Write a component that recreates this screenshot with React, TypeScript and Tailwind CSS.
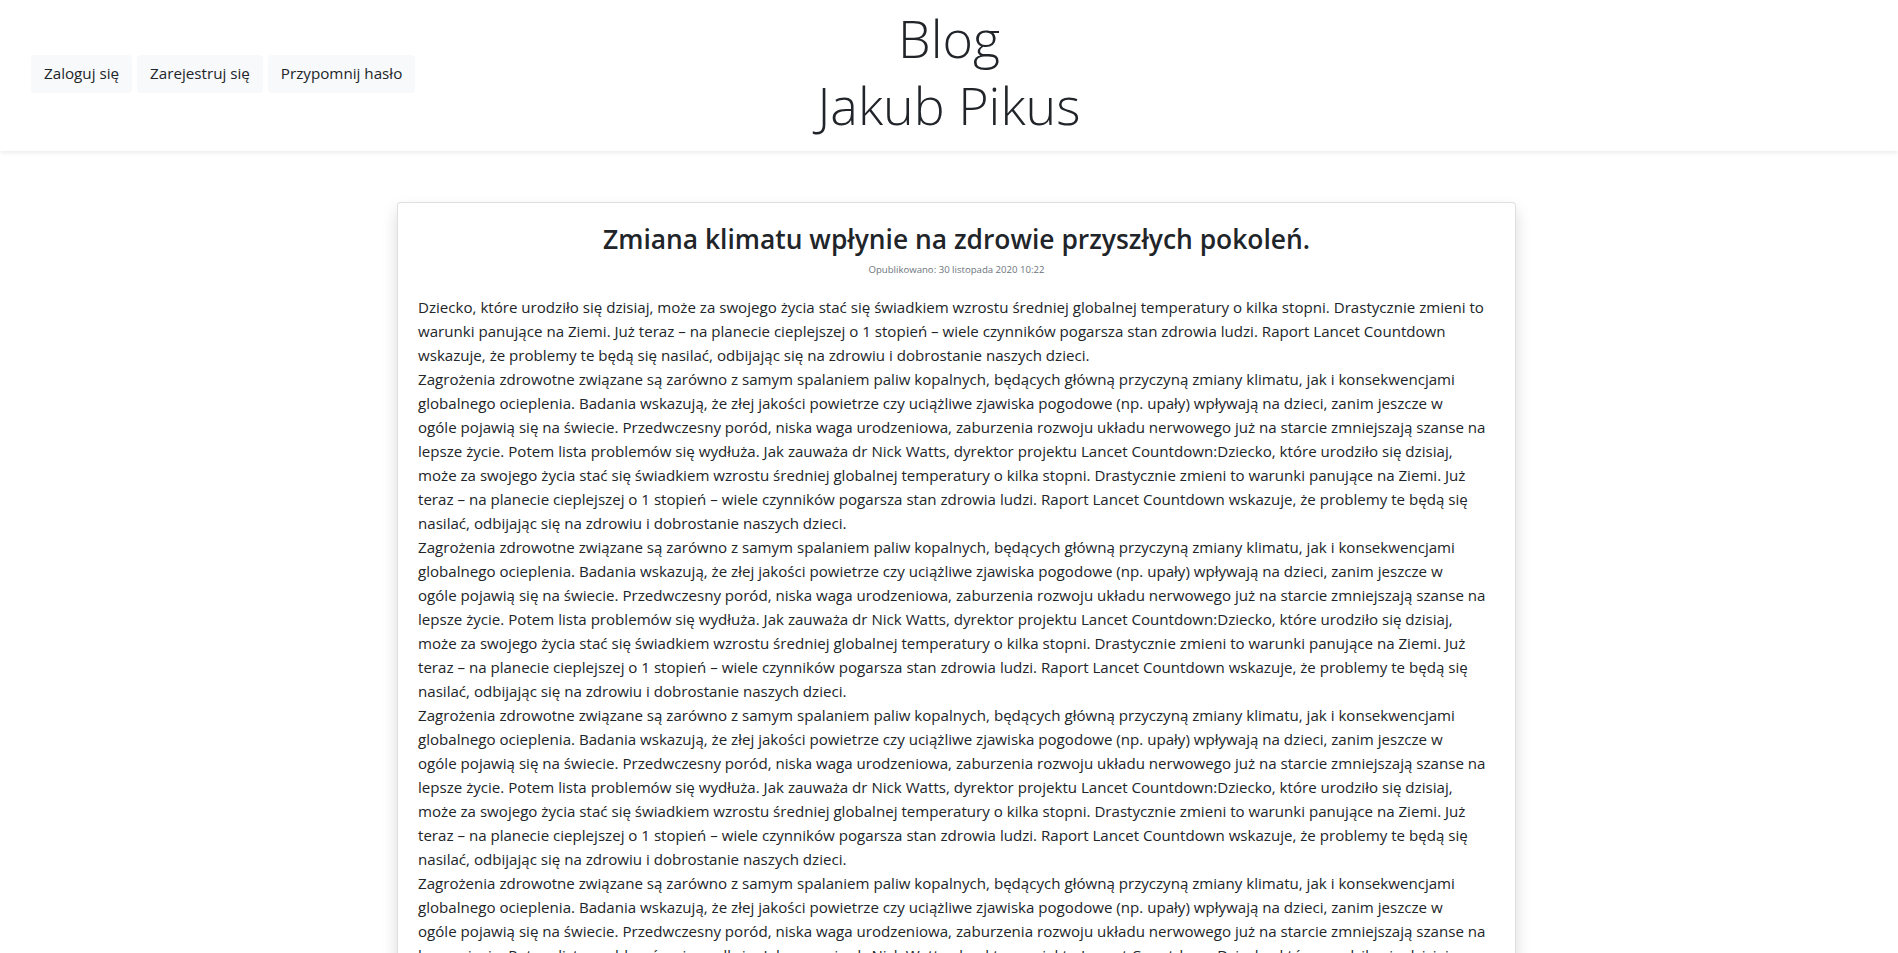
const intro =
  "Dziecko, które urodziło się dzisiaj, może za swojego życia stać się świadkiem wzrostu średniej globalnej temperatury o kilka stopni. Drastycznie zmieni to warunki panujące na Ziemi. Już teraz – na planecie cieplejszej o 1 stopień – wiele czynników pogarsza stan zdrowia ludzi. Raport Lancet Countdown wskazuje, że problemy te będą się nasilać, odbijając się na zdrowiu i dobrostanie naszych dzieci.";

// split where the original page wraps the line
const threatsStart =
  "Zagrożenia zdrowotne związane są zarówno z samym spalaniem paliw kopalnych, będących główną przyczyną zmiany klimatu, jak i konsekwencjami globalnego ocieplenia. Badania wskazują, że złej jakości powietrze czy uciążliwe zjawiska pogodowe (np. upały) wpływają na dzieci, zanim jeszcze w";
const threatsEnd =
  "ogóle pojawią się na świecie. Przedwczesny poród, niska waga urodzeniowa, zaburzenia rozwoju układu nerwowego już na starcie zmniejszają szanse na lepsze życie. Potem lista problemów się wydłuża. Jak zauważa dr Nick Watts, dyrektor projektu Lancet Countdown:";

const authLinks = ["Zaloguj się", "Zarejestruj się", "Przypomnij hasło"];

function Header() {
  return (
    <header className="grid h-[151px] grid-cols-[1fr_auto_1fr] items-center bg-white px-[31px] shadow-[0_2px_4px_rgba(0,0,0,0.075)]">
      <nav className="-mt-[4px] flex gap-[5px]">
        {authLinks.map((label) => (
          <button
            key={label}
            className="h-[38px] rounded bg-[#f8f9fa] px-[13px] text-[15.2px] text-[#212529] hover:bg-[#e2e6ea]"
          >
            {label}
          </button>
        ))}
      </nav>
      <h1 className="-mt-[10px] text-center text-[52px] font-light leading-[67px] text-[#212529]">
        Blog
        <br />
        Jakub Pikus
      </h1>
      <div />
    </header>
  );
}

function Post() {
  const repeats = [1, 2, 3, 4, 5, 6];

  return (
    <article className="w-[1119px] rounded border border-[rgba(0,0,0,0.125)] bg-white px-5 pt-5 pb-6 shadow-[0_8px_16px_rgba(0,0,0,0.15)]">
      <h2 className="text-center text-[26.4px] font-semibold leading-[32px] text-[#212529]">
        Zmiana klimatu wpłynie na zdrowie przyszłych pokoleń.
      </h2>
      <p className="mt-[7px] text-center text-[9.6px] leading-[15px] text-[#6c757d]">
        Opublikowano: 30 listopada 2020 10:22
      </p>
      <div className="mt-[18px] text-[15.1px] leading-6 text-[#212529]">
        {intro}
        {repeats.map((n) => (
          <span key={n}>
            <br />
            {threatsStart}
            <br />
            {threatsEnd}
            {intro}
          </span>
        ))}
      </div>
    </article>
  );
}

export default function App() {
  return (
    <div className="min-h-screen bg-white font-['Open_Sans',sans-serif]">
      <Header />
      <main className="flex justify-center pt-[51px] pb-12 pl-[15px]">
        <Post />
      </main>
    </div>
  );
}
